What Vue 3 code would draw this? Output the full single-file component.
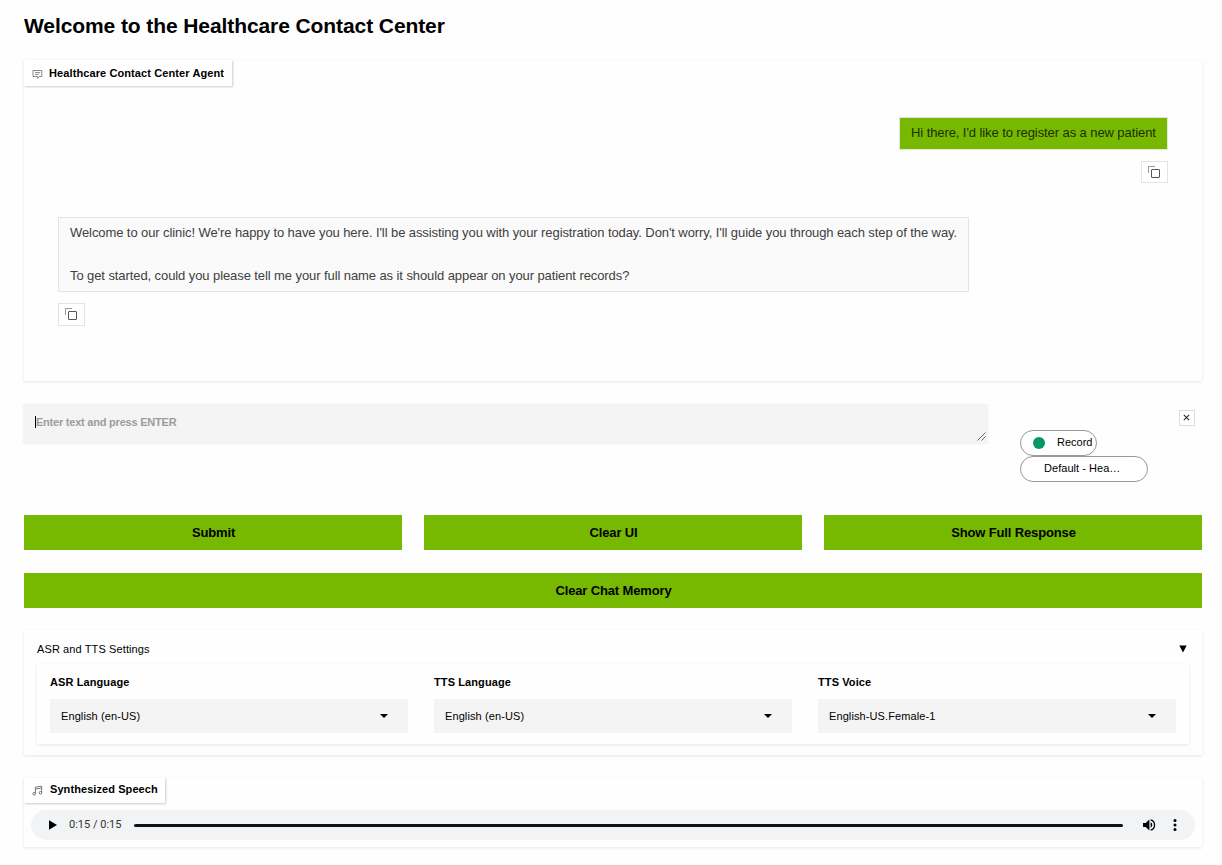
<script setup>
const settings = [
  { label: 'ASR Language', value: 'English (en-US)' },
  { label: 'TTS Language', value: 'English (en-US)' },
  { label: 'TTS Voice', value: 'English-US.Female-1' },
]
</script>

<template>
  <main class="page">
    <h1>Welcome to the Healthcare Contact Center</h1>

    <section class="card chat">
      <div class="tab chat-tab">
        <svg class="tab-icon" width="11" height="11" viewBox="0 0 11 11" fill="none" stroke="#6b6b6b" stroke-width="0.8">
          <path d="M1 1.5h8.8v6H7.2L5.6 9.4V7.5H1z" />
          <path d="M3 3.6h5.2M3 5.4h3.6" />
        </svg>
        <span class="t-agent">Healthcare Contact Center Agent</span>
      </div>
      <div class="user-row">
        <div class="bubble user"><span>Hi there, I'd like to register as a new patient</span></div>
        <button class="copy">
          <svg width="12" height="12" viewBox="0 0 12 12" fill="none"><path d="M.5 7V.5H7" stroke="#999" /><rect x="3.5" y="3.5" width="8" height="8" rx=".5" stroke="#555" /></svg>
        </button>
      </div>
      <div class="bot-row">
        <div class="bubble bot">
          <p>Welcome to our clinic! We're happy to have you here. I'll be assisting you with your registration today. Don't worry, I'll guide you through each step of the way.</p>
          <p>To get started, could you please tell me your full name as it should appear on your patient records?</p>
        </div>
        <button class="copy">
          <svg width="12" height="12" viewBox="0 0 12 12" fill="none"><path d="M.5 7V.5H7" stroke="#999" /><rect x="3.5" y="3.5" width="8" height="8" rx=".5" stroke="#555" /></svg>
        </button>
      </div>
    </section>

    <section class="entry">
      <div class="field">
        <i class="caret"></i><span class="t-ph">Enter text and press ENTER</span>
        <svg class="grip" width="9" height="9" viewBox="0 0 9 9" stroke="#555" stroke-width=".9"><path d="M.5 8.5l8-8M4.5 8.5l4-4" /></svg>
      </div>
      <div class="mic">
        <button class="pill record"><i class="dot"></i><span>Record</span></button>
        <button class="pill device"><span class="t-dev">Default - Hea…</span></button>
      </div>
      <button class="close"><svg width="7" height="7" viewBox="0 0 7 7" stroke="#333" stroke-width="1.2"><path d="M.8 .8l5.4 5.4M6.2 .8L.8 6.2" /></svg></button>
    </section>

    <div class="actions">
      <button class="action">Submit</button>
      <button class="action">Clear UI</button>
      <button class="action">Show Full Response</button>
    </div>
    <button class="action wide">Clear Chat Memory</button>

    <section class="card settings">
      <header>
        <span class="t-set">ASR and TTS Settings</span>
        <svg width="8" height="8" viewBox="0 0 8 8"><path d="M.3 .6h7.4L4 7.6z" /></svg>
      </header>
      <div class="card selects">
        <div v-for="s in settings" :key="s.label" class="setting">
          <label>{{ s.label }}</label>
          <div class="select"><span>{{ s.value }}</span><svg width="8" height="4" viewBox="0 0 8 4"><path d="M0 0h8L4 4z" /></svg></div>
        </div>
      </div>
    </section>

    <section class="card speech">
      <div class="tab speech-tab">
        <svg class="tab-icon" width="11" height="11" viewBox="0 0 11 11" fill="none" stroke="#6b6b6b" stroke-width="0.9">
          <path d="M3.4 8.6V2.2L9.6 1.2v6.4M3.4 4l6.2-1" /><circle cx="2.2" cy="8.7" r="1.3" /><circle cx="8.4" cy="7.8" r="1.3" />
        </svg>
        <span class="t-syn">Synthesized Speech</span>
      </div>
      <div class="player">
        <svg width="8" height="10" viewBox="0 0 8 10"><path d="M0 .3v9.4L8 5z" /></svg>
        <span class="time">0:15 / 0:15</span>
        <div class="track"></div>
        <svg class="volume" width="13" height="12" viewBox="0 0 13 12"><path d="M0 4h2.7L6.4 .6v10.8L2.7 8H0z" /><path d="M7.6 3.3a3 3 0 0 1 0 5.4z" /><path d="M7.7 .9a5.3 5.3 0 0 1 0 10.2" fill="none" stroke="#000" stroke-width="1.3" /></svg>
        <svg class="more" width="4" height="12" viewBox="0 0 4 12"><circle cx="2" cy="1.6" r="1.5" /><circle cx="2" cy="6" r="1.5" /><circle cx="2" cy="10.4" r="1.5" /></svg>
      </div>
    </section>
  </main>
</template>

<style>
body { background: #fefefe; }
</style>

<style scoped>
* { box-sizing: border-box; }
.page { display: flex; flex-direction: column; height: 865px; padding: 0 20px 0 24px; overflow: hidden; font-family: "Liberation Sans", Arial, sans-serif; font-size: 11px; color: #000; white-space: nowrap; }
h1 { margin: 14px 0 22px; height: 24px; line-height: 24px; font-size: 21px; letter-spacing: -.09px; }
button { font: inherit; color: inherit; padding: 0; border: 0; background: none; display: flex; align-items: center; justify-content: center; }
svg { display: block; flex: none; }
p { margin: 0; }
.card { background: #fefefe; box-shadow: 0 1px 3px rgba(0, 0, 0, .1); }
.tab { display: flex; align-items: center; height: 26px; padding-left: 8px; background: #fff; font-weight: bold; box-shadow: 1px 1px 2px rgba(0, 0, 0, .2); }
.tab-icon { margin: 2px 6px 0 0; }
.chat { height: 321px; flex: none; }
.chat-tab { width: 208px; }
.t-agent { letter-spacing: .1px; }
.user-row { display: flex; flex-direction: column; align-items: flex-end; margin: 31px 34px 0 0; }
.bubble { border: 1px solid #e4e4e4; font-size: 13px; letter-spacing: -.087px; }
.user { width: 269px; height: 33px; padding: 0 0 2px 11px; line-height: 30px; background: #76b900; color: #1d2e00; }
.copy { width: 27px; height: 22px; padding-right: 1px; border: 1px solid #e4e4e4; background: #fff; }
.user-row .copy { margin-top: 11px; }
.bot-row { margin: 34px 0 0 34px; }
.bot { width: 911px; height: 75px; padding: 4px 0 0 11px; background: #fafafa; color: #404040; line-height: 22px; }
.bot p + p { margin-top: 21px; }
.bot-row .copy { margin-top: 11px; height: 23px; padding-bottom: 1px; }
.entry { display: flex; height: 111px; margin-top: 23px; margin-left: -1px; }
.field { position: relative; display: flex; align-items: center; width: 965px; height: 40px; padding: 0 0 4px 12px; background: #f4f4f4; color: #9c9c9c; font-weight: bold; border-radius: 2px; box-shadow: 0 0 2px rgba(0, 0, 0, .07); }
.t-ph { letter-spacing: -.22px; }
.caret { width: 1px; height: 12px; background: #000; }
.grip { position: absolute; right: 2px; bottom: 3px; }
.mic { width: 128px; margin: 26px 31px 0 32px; }
.pill { height: 26px; border: 1px solid #999; border-radius: 13px; background: #fff; justify-content: flex-start; padding-bottom: 2px; }
.record { width: 77px; padding-left: 12px; }
.dot { width: 12px; height: 12px; margin: 2px 12px 0 0; border-radius: 50%; background: #079669; }
.device { width: 128px; padding-left: 23px; }
.t-dev { letter-spacing: .04px; }
.close { width: 16px; height: 16px; margin-top: 6px; padding: 0 1px 1px 0; border: 1px solid #ddd; background: #fff; }
.actions { display: grid; grid-template-columns: repeat(3, 378px); gap: 22px; }
.action { height: 35px; padding-left: 1px; background: #76b900; font-size: 13px; font-weight: bold; letter-spacing: -.14px; }
.wide { flex: none; margin-top: 23px; }
.settings { flex: none; height: 125px; margin-top: 22px; padding: 0 13px; }
.settings header { display: flex; align-items: center; justify-content: space-between; height: 34px; padding: 3px 2px 0 0; }
.t-set { letter-spacing: .11px; }
.selects { display: grid; grid-template-columns: repeat(3, 358px); gap: 26px; height: 80px; padding: 0 13px; }
.setting label { display: block; height: 35px; line-height: 36px; font-weight: bold; letter-spacing: .1px; }
.select { display: flex; align-items: center; justify-content: space-between; height: 34px; padding: 0 20px 0 11px; background: #f4f4f4; letter-spacing: .1px; }
.speech { flex: none; height: 69px; margin-top: 23px; }
.speech-tab { width: 141px; height: 25px; padding-bottom: 3px; }
.t-syn { margin-left: 1px; letter-spacing: .08px; }
.player { display: flex; align-items: center; height: 30px; margin: 7px 7px 0; padding: 0 18px; border-radius: 15px; background: #f1f3f4; }
.time { width: 65px; margin-left: 12px; padding-bottom: 2px; font-size: 11px; color: #333; font-family: Roboto, sans-serif; }
.track { flex: 1; height: 3px; border-radius: 2px; background: #111118; }
.volume { margin-left: 20px; }
.more { margin-left: 17px; }
</style>
